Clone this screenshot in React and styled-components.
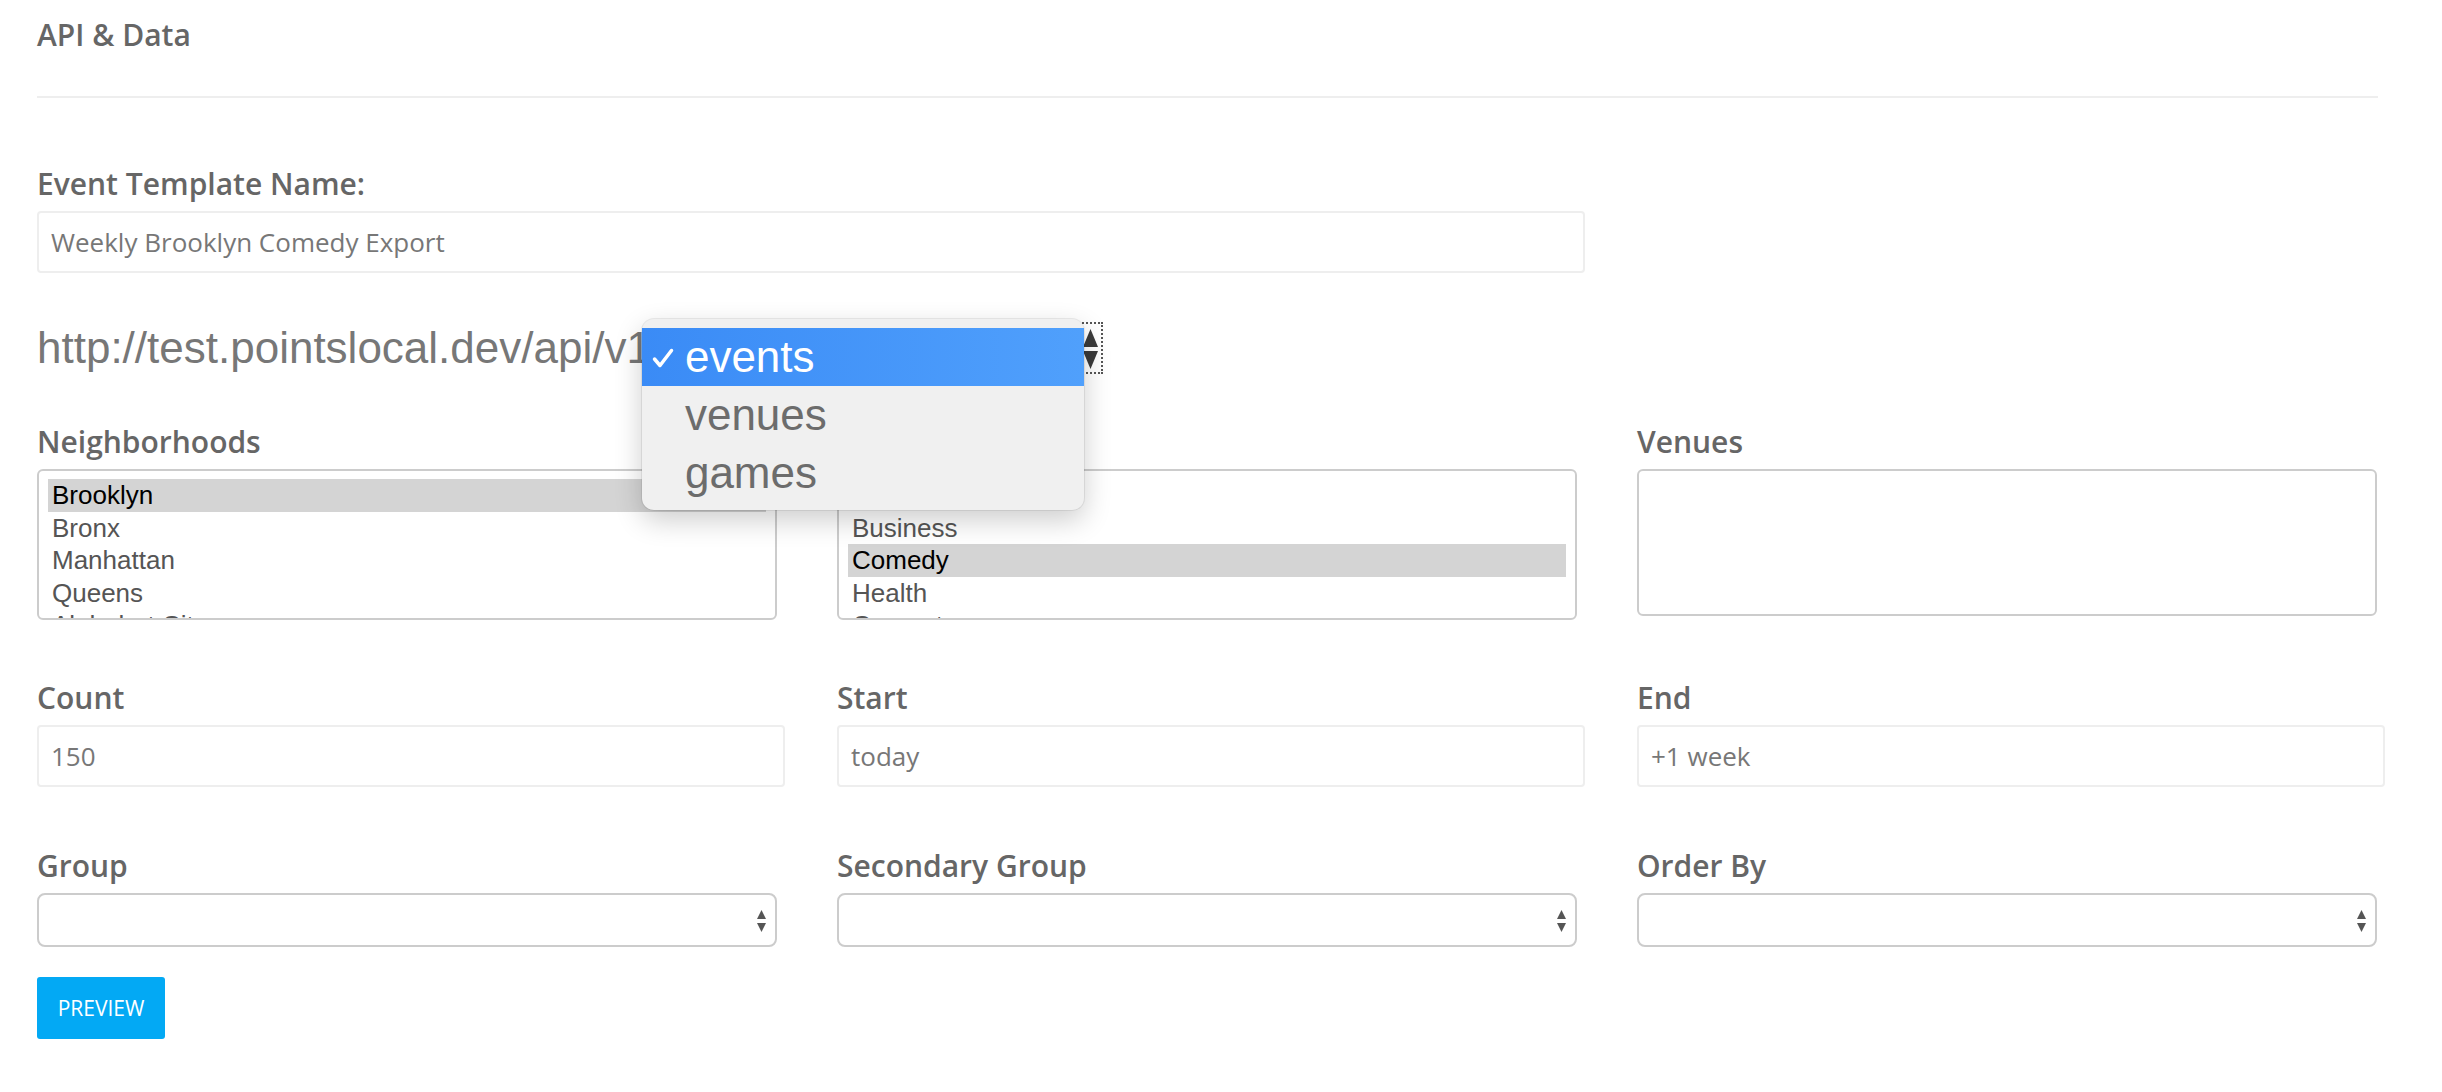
import React from 'react';
import styled, { createGlobalStyle } from 'styled-components';

const GlobalStyle = createGlobalStyle`
  html, body {
    margin: 0;
    padding: 0;
    background: #fff;
  }
  body {
    font-family: "Open Sans", "Liberation Sans", sans-serif;
  }
  * {
    box-sizing: border-box;
  }
`;

const Page = styled.div`
  width: 2341px;
  margin-left: 37px;
  padding-top: 15px;
`;

const Heading = styled.h4`
  margin: 0;
  font-size: 30px;
  line-height: 40px;
  font-weight: 600;
  color: #666;
`;

const Rule = styled.hr`
  margin: 41px 0 0;
  border: 0;
  border-top: 2px solid #eee;
`;

const Section = styled.div`
  margin-top: ${props => props.$top}px;
`;

const Columns = styled.div`
  display: grid;
  grid-template-columns: repeat(3, 740px);
  column-gap: 60px;
`;

const Label = styled.label`
  display: block;
  margin-bottom: 6px;
  font-size: 30px;
  line-height: 42px;
  font-weight: 600;
  color: #666;
`;

const TextInput = styled.input`
  display: block;
  width: ${props => props.$width}px;
  height: 62px;
  padding: 0 12px;
  border: 2px solid #eee;
  border-radius: 4px;
  background: #fff;
  font-family: "Open Sans", sans-serif;
  font-size: 26px;
  color: #777;
  outline: none;
`;

const UrlRow = styled.div`
  display: flex;
  align-items: center;
  height: 52px;
`;

const UrlText = styled.span`
  font-family: "Liberation Sans", Arial, sans-serif;
  font-size: 44px;
  line-height: 52px;
  color: #777;
  white-space: nowrap;
`;

const EndpointSelect = styled.div`
  position: relative;
  width: 452px;
  height: 52px;
  border: 2px dotted #555;
`;

const EndpointArrows = styled.svg`
  position: absolute;
  right: 3px;
  top: 3px;
`;

const Popup = styled.div`
  position: absolute;
  left: -11px;
  top: -5px;
  width: 442px;
  padding: 9px 0 8px;
  background: #f0f0f0;
  border-radius: 12px;
  box-shadow: 0 10px 28px rgba(0, 0, 0, 0.2), 0 0 0 1px rgba(0, 0, 0, 0.07);
  z-index: 10;
  font-family: "Liberation Sans", Arial, sans-serif;
`;

const PopupItem = styled.div`
  position: relative;
  display: flex;
  align-items: center;
  height: 58px;
  padding-left: 43px;
  font-size: 44px;
  color: ${props => props.$active ? '#fff' : '#6c6c6c'};
  background: ${props => props.$active ? 'linear-gradient(90deg, #3a8bf6, #50a0fc)' : 'transparent'};
`;

const Check = styled.svg`
  position: absolute;
  left: 10px;
  top: 20px;
`;

const ListBox = styled.div`
  height: ${props => props.$height}px;
  padding: 8px 9px 0;
  border: 2px solid #ccc;
  border-radius: 6px;
  overflow: hidden;
  font-family: "Liberation Sans", Arial, sans-serif;
  font-size: 26px;
  line-height: 32.5px;
`;

const ListOption = styled.div`
  padding: 0 4px;
  white-space: nowrap;
  color: ${props => props.$selected ? '#000' : '#555'};
  background: ${props => props.$selected ? '#d4d4d4' : 'transparent'};
`;

const SelectBox = styled.div`
  position: relative;
  height: 54px;
  border: 2px solid #ccc;
  border-radius: 8px;
  background: #fff;
`;

const SelectArrows = styled.svg`
  position: absolute;
  right: 9px;
  top: 15px;
`;

const Button = styled.button`
  display: block;
  width: 128px;
  height: 62px;
  padding: 0;
  border: 0;
  border-radius: 3px;
  background: #03a9f4;
  color: #fff;
  font-family: "Open Sans", sans-serif;
  font-size: 21px;
  text-transform: uppercase;
`;

const neighborhoods = ['Brooklyn', 'Bronx', 'Manhattan', 'Queens', 'Alphabet City'];
const categories = ['Arts', 'Business', 'Comedy', 'Health', 'Concerts'];

function Listing({ items, selected, height = 151 }) {
  return (
    <ListBox $height={height}>
      {items.map(item => (
        <ListOption key={item} $selected={item === selected}>{item}</ListOption>
      ))}
    </ListBox>
  );
}

function Dropdown() {
  return (
    <SelectBox>
      <SelectArrows width="9" height="22" viewBox="0 0 9 22">
        <path d="M4.5 0 L9 9 L0 9 Z" fill="#555" />
        <path d="M0 13 L9 13 L4.5 22 Z" fill="#555" />
      </SelectArrows>
    </SelectBox>
  );
}

export default function App() {
  return (
    <>
      <GlobalStyle />
      <Page>
        <Heading>API &amp; Data</Heading>
        <Rule />

        <Section $top={65}>
          <Label>Event Template Name:</Label>
          <TextInput $width={1548} defaultValue="Weekly Brooklyn Comedy Export" readOnly />
        </Section>

        <Section $top={49}>
          <UrlRow>
            <UrlText>http://test.pointslocal.dev/api/v1</UrlText>
            <EndpointSelect>
              <EndpointArrows width="15" height="44" viewBox="0 0 15 44">
                <path d="M7.5 2 L15 20 L0 20 Z" fill="#3a3a3a" />
                <path d="M0 24 L15 24 L7.5 42 Z" fill="#3a3a3a" />
              </EndpointArrows>
              <Popup>
                <PopupItem $active>
                  <Check width="22" height="20" viewBox="0 0 22 20">
                    <path d="M2.5 11 L8 17.5 L19.5 2.5" fill="none" stroke="#fff" strokeWidth="3.5" strokeLinecap="round" strokeLinejoin="round" />
                  </Check>
                  events
                </PopupItem>
                <PopupItem>venues</PopupItem>
                <PopupItem>games</PopupItem>
              </Popup>
            </EndpointSelect>
          </UrlRow>
        </Section>

        <Section $top={47}>
          <Columns>
            <div>
              <Label>Neighborhoods</Label>
              <Listing items={neighborhoods} selected="Brooklyn" />
            </div>
            <div>
              <Label>Categories</Label>
              <Listing items={categories} selected="Comedy" />
            </div>
            <div>
              <Label>Venues</Label>
              <Listing items={[]} height={147} />
            </div>
          </Columns>
        </Section>

        <Section $top={57}>
          <Columns>
            <div>
              <Label>Count</Label>
              <TextInput $width={748} defaultValue="150" readOnly />
            </div>
            <div>
              <Label>Start</Label>
              <TextInput $width={748} defaultValue="today" readOnly />
            </div>
            <div>
              <Label>End</Label>
              <TextInput $width={748} defaultValue="+1 week" readOnly />
            </div>
          </Columns>
        </Section>

        <Section $top={58}>
          <Columns>
            <div>
              <Label>Group</Label>
              <Dropdown />
            </div>
            <div>
              <Label>Secondary Group</Label>
              <Dropdown />
            </div>
            <div>
              <Label>Order By</Label>
              <Dropdown />
            </div>
          </Columns>
        </Section>

        <Section $top={30}>
          <Button>Preview</Button>
        </Section>
      </Page>
    </>
  );
}
